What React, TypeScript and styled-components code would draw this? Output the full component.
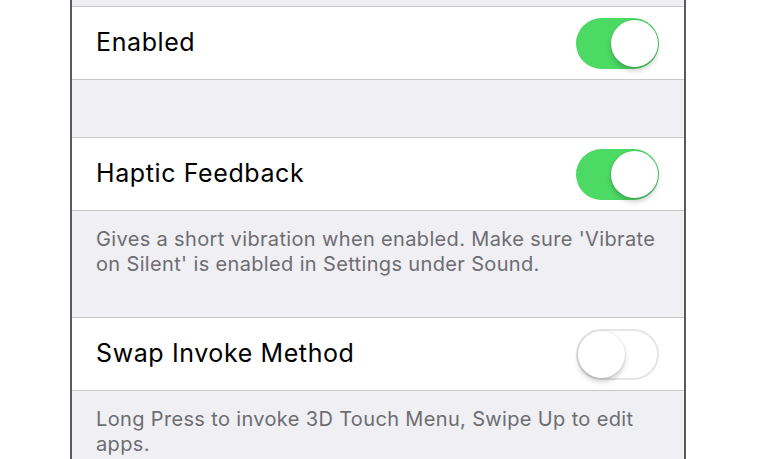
import React from "react";
import styled, { createGlobalStyle } from "styled-components";

const Global = createGlobalStyle`
  html, body { margin: 0; padding: 0; background: #ffffff; }
  body { font-family: Inter, "Liberation Sans", sans-serif; -webkit-font-smoothing: antialiased; }
`;

const Page = styled.div`
  width: 760px;
  height: 459px;
  overflow: hidden;
  display: flex;
  justify-content: flex-start;
  background: #ffffff;
`;

const Panel = styled.div`
  margin-left: 70px;
  width: 612px;
  height: 459px;
  border-left: 2px solid #5a5a5a;
  border-right: 2px solid #5a5a5a;
  background: #efeff4;
  display: flex;
  flex-direction: column;
`;

const Spacer = styled.div<{ $h: number }>`
  height: ${(p) => p.$h}px;
  flex: none;
`;

const Row = styled.div`
  flex: none;
  height: 72px;
  box-sizing: content-box;
  background: #ffffff;
  border-top: 1px solid #c8c7cc;
  border-bottom: 1px solid #c8c7cc;
  display: flex;
  align-items: center;
  justify-content: space-between;
  padding: 0 25px 0 24px;
`;

const Label = styled.span`
  font-size: 25px;
  color: #000000;
  letter-spacing: 0.6px;
  margin-top: -2px;
`;

const Footer = styled.div<{ $bottom: number }>`
  flex: none;
  padding: 16px 20px ${(p) => p.$bottom}px 24px;
  font-size: 20px;
  line-height: 25px;
  letter-spacing: 0.35px;
  color: #6d6d72;
`;

const Track = styled.div<{ $on: boolean }>`
  position: relative;
  width: 83px;
  height: 51px;
  box-sizing: border-box;
  border-radius: 26px;
  background: ${(p) => (p.$on ? "#4cd964" : "#ffffff")};
  border: ${(p) => (p.$on ? "none" : "2px solid #e5e5ea")};
  flex: none;
`;

const Knob = styled.div<{ $on: boolean }>`
  position: absolute;
  top: ${(p) => (p.$on ? 2 : 0)}px;
  ${(p) => (p.$on ? "right: 1px;" : "left: 0px;")}
  width: 47px;
  height: 47px;
  border-radius: 50%;
  background: #ffffff;
  box-shadow: 0 4px 5px rgba(0, 0, 0, 0.18), 0 0 0 1px rgba(0, 0, 0, 0.06);
`;

const Switch = ({ on }: { on: boolean }) => (
  <Track $on={on}>
    <Knob $on={on} />
  </Track>
);

export default function App() {
  return (
    <Page>
      <Global />
      <Panel>
        <Spacer $h={6} />
        <Row>
          <Label>Enabled</Label>
          <Switch on />
        </Row>
        <Spacer $h={57} />
        <Row>
          <Label>Haptic Feedback</Label>
          <Switch on />
        </Row>
        <Footer $bottom={40}>
          Gives a short vibration when enabled. Make sure 'Vibrate on Silent' is
          enabled in Settings under Sound.
        </Footer>
        <Row>
          <Label>Swap Invoke Method</Label>
          <Switch on={false} />
        </Row>
        <Footer $bottom={40}>
          Long Press to invoke 3D Touch Menu, Swipe Up to edit apps.
        </Footer>
      </Panel>
    </Page>
  );
}
